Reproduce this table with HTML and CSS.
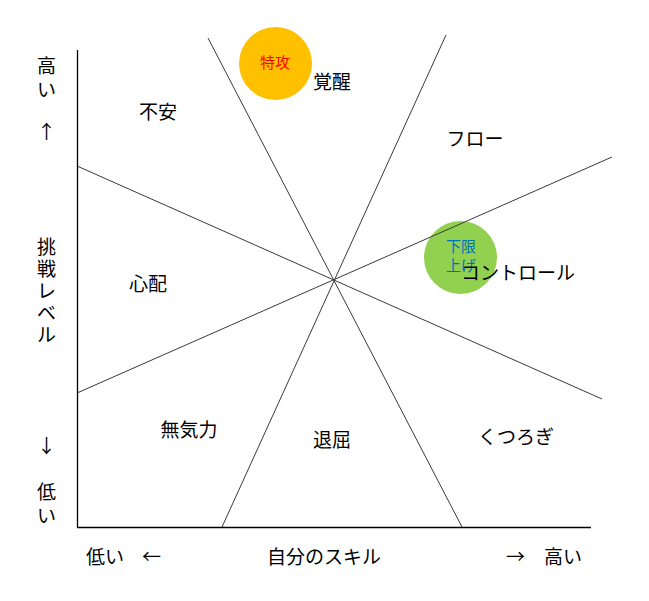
FILE: index.html
```html
<!DOCTYPE html>
<html lang="ja">
<head>
<meta charset="utf-8">
<title>フロー理論</title>
<link rel="stylesheet" href="styles.css">
</head>
<body>
<div class="page">
  <svg class="canvas" viewBox="0 0 649 601" width="649" height="601" aria-hidden="true">
    <circle cx="275.5" cy="63.5" r="36.5" fill="#FFC000"/>
    <circle cx="460.5" cy="257.5" r="36.5" fill="#92D050"/>
    <g stroke="#3a3a3a" stroke-width="1" fill="none">
      <line x1="208" y1="38" x2="462" y2="527"/>
      <line x1="446" y1="35" x2="222" y2="527"/>
      <line x1="77" y1="166" x2="602" y2="399"/>
      <line x1="77" y1="393" x2="612" y2="157"/>
    </g>
    <g stroke="#000" stroke-width="1.3" fill="none">
      <line x1="77.5" y1="50" x2="77.5" y2="527.5"/>
      <line x1="77" y1="527.5" x2="591" y2="527.5"/>
    </g>
  </svg>

  <div class="top">
    <div class="yaxis">
      <div class="ylabel yhigh">高<br>い</div>
      <div class="ylabel yup">↑</div>
      <div class="ylabel ytitle">挑<br>戦<br>レ<br>ベ<br>ル</div>
      <div class="ylabel ydown">↓</div>
      <div class="ylabel ylow">低<br>い</div>
    </div>
    <div class="plot"></div>
  </div>

  <div class="xaxis">
    <span class="xlow">低い</span>
    <span class="xleft">←</span>
    <span class="xtitle">自分のスキル</span>
    <span class="xright">→</span>
    <span class="xhigh">高い</span>
  </div>

  <span class="node n-tokko">特攻</span>
  <span class="node n-kakusei">覚醒</span>
  <span class="node n-fuan">不安</span>
  <span class="node n-flow">フロー</span>
  <span class="node n-shinpai">心配</span>
  <span class="node n-kagen">下限<br>上げ</span>
  <span class="node n-control">コントロール</span>
  <span class="node n-mukiryoku">無気力</span>
  <span class="node n-taikutsu">退屈</span>
  <span class="node n-kutsurogi">くつろぎ</span>
</div>
</body>
</html>
```

FILE: styles.css
```css
* { box-sizing: border-box; }

html, body {
  margin: 0;
  padding: 0;
  background: #ffffff;
}

body {
  font-family: "Noto Sans CJK JP", "Noto Sans", sans-serif;
  color: #000;
}

.page {
  position: relative;
  width: 649px;
  height: 601px;
  overflow: hidden;
}

.canvas {
  position: absolute;
  left: 0;
  top: 0;
  pointer-events: none;
}

.top {
  display: flex;
  height: 530px;
}

.yaxis {
  width: 77px;
  padding-left: 16px;
  display: flex;
  flex-direction: column;
  align-items: center;
}

.ylabel {
  font-size: 19px;
  line-height: 24px;
  text-align: center;
}

.yhigh { margin-top: 53px; }
.yup { margin-top: 18px; }
.ytitle { margin-top: 92px; line-height: 22px; }
.ydown { margin-top: 88px; }
.ylow { margin-top: 22px; }

.plot { flex: 1; }

.xaxis {
  display: flex;
  align-items: center;
  margin-top: 14px;
  padding-left: 86px;
  font-size: 19px;
  line-height: 24px;
}

.xleft { margin-left: 18px; }
.xtitle { margin-left: 106px; }
.xright { margin-left: 125px; }
.xhigh { margin-left: 19px; }

.node {
  position: absolute;
  font-size: 19px;
  line-height: 19px;
  white-space: nowrap;
  transform: translate(-50%, -50%);
}

.n-tokko { left: 275px; top: 61px; font-size: 15px; line-height: 15px; color: #ff0000; }
.n-kakusei { left: 332px; top: 80px; }
.n-fuan { left: 158px; top: 110px; }
.n-flow { left: 475px; top: 137px; }
.n-shinpai { left: 148px; top: 282px; }
.n-kagen {
  left: 446px;
  top: 236px;
  transform: none;
  font-size: 15px;
  line-height: 19px;
  color: #0070c0;
}
.n-control { left: 518px; top: 271px; }
.n-mukiryoku { left: 189px; top: 428px; }
.n-taikutsu { left: 332px; top: 438px; }
.n-kutsurogi { left: 516px; top: 435px; }
```
